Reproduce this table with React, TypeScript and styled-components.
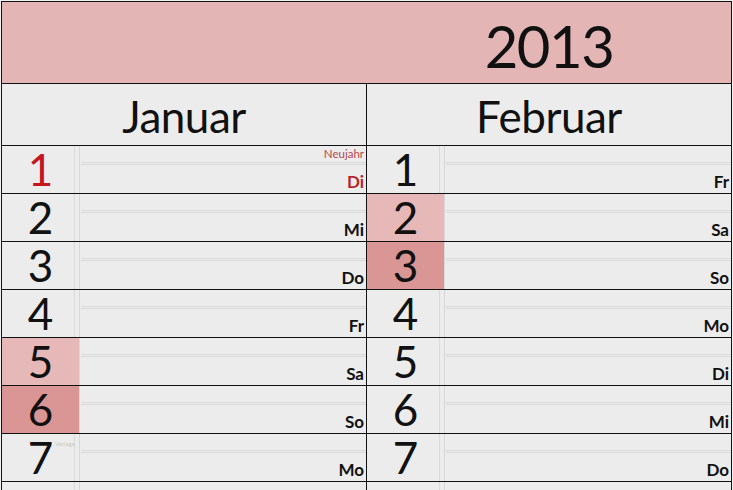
import styled, { createGlobalStyle } from 'styled-components';

const GlobalStyle = createGlobalStyle`
  html, body {
    margin: 0;
    padding: 0;
    background: #f2f2f2;
    overflow: hidden;
  }
`;

type Tone = 'plain' | 'sat' | 'sun';

interface Day {
  day: number;
  weekday: string;
  holiday?: string;
  mark?: string;
}

interface Month {
  name: string;
  days: Day[];
}

const months: Month[] = [
  {
    name: 'Januar',
    days: [
      { day: 1, weekday: 'Di', holiday: 'Neujahr' },
      { day: 2, weekday: 'Mi' },
      { day: 3, weekday: 'Do' },
      { day: 4, weekday: 'Fr' },
      { day: 5, weekday: 'Sa' },
      { day: 6, weekday: 'So' },
      { day: 7, weekday: 'Mo', mark: 'Vorlage' },
    ],
  },
  {
    name: 'Februar',
    days: [
      { day: 1, weekday: 'Fr' },
      { day: 2, weekday: 'Sa' },
      { day: 3, weekday: 'So' },
      { day: 4, weekday: 'Mo' },
      { day: 5, weekday: 'Di' },
      { day: 6, weekday: 'Mi' },
      { day: 7, weekday: 'Do' },
    ],
  },
];

const toneColors: Record<Tone, string> = {
  plain: '#ececec',
  sat: '#e6b8b7',
  sun: '#d99694',
};

const Sheet = styled.div`
  width: 731px;
  margin: 1px 0 0 1px;
  border-top: 1px solid #111;
  border-left: 1px solid #111;
  border-right: 1px solid #111;
  box-sizing: border-box;
  background: #ececec;
  font-family: Lato, 'Open Sans', sans-serif;
  color: #111;
`;

const YearHeader = styled.div`
  height: 81px;
  display: grid;
  grid-template-columns: 365px 1fr;
  align-items: center;
  background: #e4b5b5;
  border-bottom: 1px solid #111;
`;

const YearText = styled.div`
  grid-column: 2;
  text-align: center;
  font-size: 58px;
  line-height: 58px;
  letter-spacing: -1.5px;
  padding-top: 6px;
`;

const Months = styled.div`
  display: flex;
`;

const MonthColumn = styled.div`
  flex: 1;

  & + & {
    border-left: 1px solid #111;
  }
`;

const MonthTitle = styled.div`
  height: 61px;
  border-bottom: 1px solid #111;
  text-align: center;
  font-size: 44px;
  line-height: 64px;
  letter-spacing: -0.5px;
`;

const DayRow = styled.div`
  display: grid;
  grid-template-columns: 78px 1fr;
  height: 47px;
  border-bottom: 1px solid #111;
`;

const NumberCell = styled.div<{ $tone: Tone; $red: boolean }>`
  position: relative;
  background: ${(p) => toneColors[p.$tone]};
  border-right: 1px solid #d8d8d8;
  box-shadow: ${(p) =>
    p.$tone === 'plain' ? 'inset -4px 0 0 #ececec, inset -5px 0 0 #dadada' : 'none'};
  text-align: center;
  font-size: 44px;
  line-height: 47px;
  color: ${(p) => (p.$red ? '#c3171d' : '#111')};
`;

const Mark = styled.span`
  position: absolute;
  top: 6px;
  left: 53px;
  font-size: 6px;
  line-height: 7px;
  color: #c8c8c8;
`;

const InfoCell = styled.div`
  display: flex;
  flex-direction: column;
  padding-left: 1px;
`;

const HolidayLine = styled.div`
  height: 16px;
  border-bottom: 3px double #d9d9d9;
  text-align: right;
  padding-right: 2px;
  font-size: 11.5px;
  line-height: 16px;
  color: #b5474b;
`;

const WeekdayLine = styled.div<{ $red: boolean }>`
  flex: 1;
  display: flex;
  align-items: flex-end;
  justify-content: flex-end;
  padding: 0 2px 3px 0;
  font-size: 17px;
  line-height: 17px;
  font-weight: 700;
  color: ${(p) => (p.$red ? '#b5252a' : '#111')};
`;

const FillerRow = styled.div`
  display: grid;
  grid-template-columns: 78px 1fr;
  height: 20px;
`;

const FillerNumber = styled.div`
  border-right: 1px solid #d8d8d8;
  box-shadow: inset -4px 0 0 #ececec, inset -5px 0 0 #dadada;
`;

const toneFor = (day: Day): Tone =>
  day.weekday === 'Sa' ? 'sat' : day.weekday === 'So' ? 'sun' : 'plain';

export default function App() {
  return (
    <>
      <GlobalStyle />
      <Sheet>
        <YearHeader>
          <YearText>2013</YearText>
        </YearHeader>
        <Months>
          {months.map((month) => (
            <MonthColumn key={month.name}>
              <MonthTitle>{month.name}</MonthTitle>
              {month.days.map((day) => {
                const red = Boolean(day.holiday);
                return (
                  <DayRow key={day.day}>
                    <NumberCell $tone={red ? 'plain' : toneFor(day)} $red={red}>
                      {day.day}
                      {day.mark && <Mark>{day.mark}</Mark>}
                    </NumberCell>
                    <InfoCell>
                      <HolidayLine>{day.holiday}</HolidayLine>
                      <WeekdayLine $red={red}>{day.weekday}</WeekdayLine>
                    </InfoCell>
                  </DayRow>
                );
              })}
              <FillerRow>
                <FillerNumber />
                <div />
              </FillerRow>
            </MonthColumn>
          ))}
        </Months>
      </Sheet>
    </>
  );
}
